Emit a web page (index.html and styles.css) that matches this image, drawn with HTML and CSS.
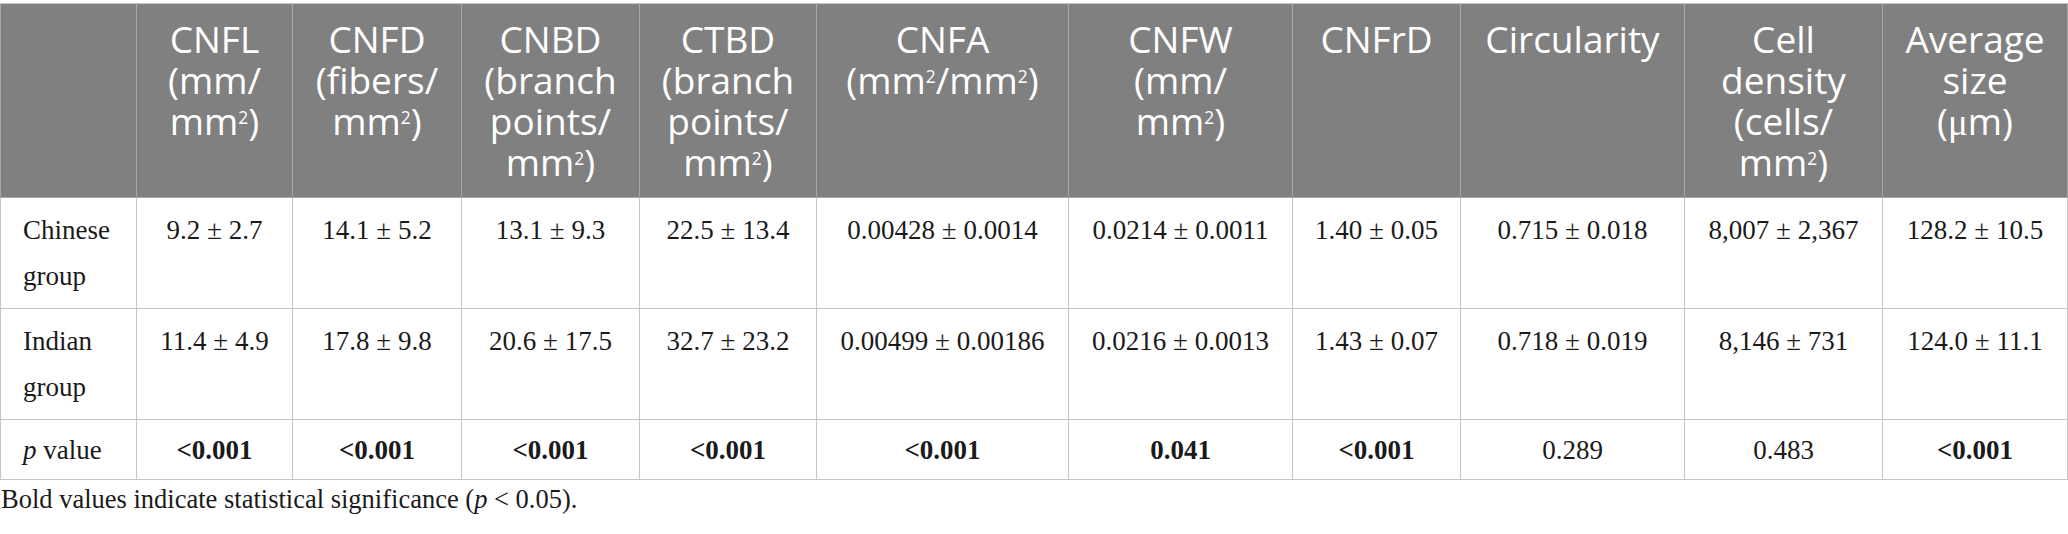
FILE: index.html
```html
<!DOCTYPE html>
<html lang="en">
<head>
<meta charset="utf-8">
<title>Table</title>
<link rel="stylesheet" href="styles.css">
</head>
<body>
<div class="page">
  <table class="data-table">
    <colgroup>
      <col class="c0"><col class="c1"><col class="c2"><col class="c3"><col class="c4"><col class="c5"><col class="c6"><col class="c7"><col class="c8"><col class="c9"><col class="c10">
    </colgroup>
    <thead>
      <tr>
        <th></th>
        <th>CNFL<br>(mm/<br>mm<sup>2</sup>)</th>
        <th>CNFD<br>(fibers/<br>mm<sup>2</sup>)</th>
        <th>CNBD<br>(branch<br>points/<br>mm<sup>2</sup>)</th>
        <th>CTBD<br>(branch<br>points/<br>mm<sup>2</sup>)</th>
        <th>CNFA<br>(mm<sup>2</sup>/mm<sup>2</sup>)</th>
        <th>CNFW<br>(mm/<br>mm<sup>2</sup>)</th>
        <th>CNFrD</th>
        <th>Circularity</th>
        <th>Cell<br>density<br>(cells/<br>mm<sup>2</sup>)</th>
        <th>Average<br>size<br>(<span class="mu">μ</span>m)</th>
      </tr>
    </thead>
    <tbody>
      <tr class="data-row">
        <td class="label">Chinese<br>group</td>
        <td>9.2 ± 2.7</td>
        <td>14.1 ± 5.2</td>
        <td>13.1 ± 9.3</td>
        <td>22.5 ± 13.4</td>
        <td>0.00428 ± 0.0014</td>
        <td>0.0214 ± 0.0011</td>
        <td>1.40 ± 0.05</td>
        <td>0.715 ± 0.018</td>
        <td>8,007 ± 2,367</td>
        <td>128.2 ± 10.5</td>
      </tr>
      <tr class="data-row">
        <td class="label">Indian<br>group</td>
        <td>11.4 ± 4.9</td>
        <td>17.8 ± 9.8</td>
        <td>20.6 ± 17.5</td>
        <td>32.7 ± 23.2</td>
        <td>0.00499 ± 0.00186</td>
        <td>0.0216 ± 0.0013</td>
        <td>1.43 ± 0.07</td>
        <td>0.718 ± 0.019</td>
        <td>8,146 ± 731</td>
        <td>124.0 ± 11.1</td>
      </tr>
      <tr class="p-row">
        <td class="label"><i>p</i> value</td>
        <td><b>&lt;0.001</b></td>
        <td><b>&lt;0.001</b></td>
        <td><b>&lt;0.001</b></td>
        <td><b>&lt;0.001</b></td>
        <td><b>&lt;0.001</b></td>
        <td><b>0.041</b></td>
        <td><b>&lt;0.001</b></td>
        <td>0.289</td>
        <td>0.483</td>
        <td><b>&lt;0.001</b></td>
      </tr>
    </tbody>
  </table>
  <p class="footnote">Bold values indicate statistical significance (<i>p</i> &lt; 0.05).</p>
</div>
</body>
</html>
```
FILE: styles.css
```css
html, body {
  margin: 0;
  padding: 0;
  background: #ffffff;
}

.page {
  padding-top: 3px;
  width: 2068px;
}

.data-table {
  border-collapse: collapse;
  table-layout: fixed;
  width: 2067px;
  font-family: "Liberation Serif", "Times New Roman", serif;
  color: #1a1a1a;
}

.c0 { width: 136px; }
.c1 { width: 156px; }
.c2 { width: 169px; }
.c3 { width: 178px; }
.c4 { width: 177px; }
.c5 { width: 252px; }
.c6 { width: 224px; }
.c7 { width: 168px; }
.c8 { width: 224px; }
.c9 { width: 198px; }
.c10 { width: 185px; }

.data-table th {
  background: #808080;
  color: #ffffff;
  font-family: "Open Sans", "Noto Sans", sans-serif;
  font-weight: 400;
  font-size: 37px;
  line-height: 41px;
  text-align: center;
  vertical-align: top;
  padding: 14px 6px 15px;
  border: 1px solid #a6a6a6;
  border-top-color: #c8c8c8;
  white-space: nowrap;
  height: 164px;
}

.data-table sup {
  font-size: 0.47em;
  line-height: 0;
  vertical-align: 0.65em;
}

.mu {
  font-family: "Liberation Serif", serif;
}

.data-table td {
  font-size: 27px;
  line-height: 46px;
  text-align: center;
  vertical-align: top;
  border: 1px solid #c6c6c6;
  padding: 9px 10px 9px;
  white-space: nowrap;
}

.data-table td.label {
  text-align: left;
  padding-left: 22px;
}

.data-table .p-row td {
  padding-top: 7px;
  padding-bottom: 6px;
}

.data-table b {
  font-weight: 700;
}

.footnote {
  margin: 0;
  padding: 1px 0 0 1px;
  font-family: "Liberation Serif", "Times New Roman", serif;
  font-size: 26.5px;
  line-height: 36px;
  color: #1a1a1a;
}
```
